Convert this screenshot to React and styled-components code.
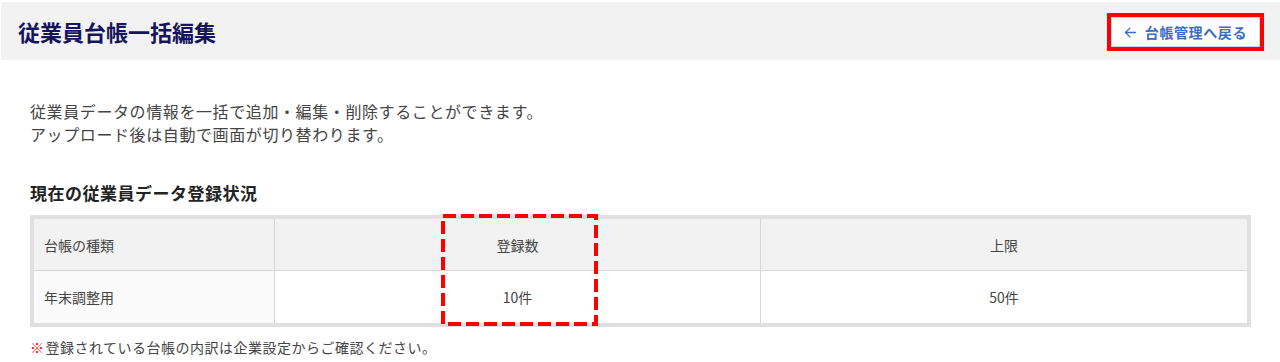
import React from "react";
import styled, { createGlobalStyle } from "styled-components";

const Global = createGlobalStyle`
  html, body { margin: 0; padding: 0; background: #fff; }
  body { font-family: "Noto Sans CJK JP", "Noto Sans", sans-serif; color: #444; }
`;

const Page = styled.div`
  padding-top: 2px;
  padding-left: 1px;
`;

const Header = styled.header`
  height: 58px;
  background: #f2f2f2;
  display: flex;
  align-items: center;
  justify-content: space-between;
  padding: 0 16px 0 17px;
`;

const Title = styled.h1`
  margin: 0;
  font-size: 22px;
  font-weight: 700;
  color: #15155e;
`;

const Highlight = styled.div`
  border: 4px solid #ff0000;
  margin-top: 2px;
  display: flex;
`;

const BackButton = styled.button`
  height: 30px;
  padding: 0 12px 0 11px;
  background: #fff;
  border: 1px solid #c9d6ee;
  color: #3a6cc4;
  font-family: inherit;
  font-size: 14px;
  letter-spacing: 0.6px;
  font-weight: 700;
  display: flex;
  align-items: center;
  gap: 7px;
  cursor: pointer;
`;

const Content = styled.main`
  padding: 40px 29px 0 29px;
`;

const Description = styled.p`
  margin: 0;
  font-size: 16px;
  letter-spacing: 0.6px;
  line-height: 23px;
  color: #444;
`;

const SectionTitle = styled.h2`
  margin: 35px 0 0;
  font-size: 17px;
  letter-spacing: 0.5px;
  line-height: 24px;
  font-weight: 700;
  color: #222;
`;

const TableWrap = styled.div`
  position: relative;
  margin-top: 10px;
`;

const Table = styled.table`
  width: 100%;
  border-collapse: separate;
  border-spacing: 0;
  border: 4px solid #e0e0e0;
  font-size: 14px;
  color: #444;
  table-layout: fixed;
`;

const Cell = styled.td`
  height: ${(p) => (p.$head ? "51px" : "52px")};
  padding: 0 10px;
  text-align: ${(p) => (p.$left ? "left" : "center")};
  background: ${(p) => (p.$head ? "#f2f2f2" : p.$left ? "#fafafa" : "#fff")};
  border-right: ${(p) => (p.$last ? "none" : "1px solid #d6d6d6")};
  border-bottom: ${(p) => (p.$head ? "1px solid #d6d6d6" : "none")};
  font-weight: 400;
`;

const DashedMark = styled.svg`
  position: absolute;
  left: 411px;
  top: -1px;
  width: 157px;
  height: 112px;
  pointer-events: none;
`;

const Note = styled.p`
  margin: 10px 0 0;
  font-size: 14px;
  letter-spacing: 0.5px;
  line-height: 20px;
  color: #444;
`;

const Mark = styled.span`
  color: #ff0000;
  margin-right: 1px;
`;

export default function App() {
  return (
    <Page>
      <Global />
      <Header>
        <Title>従業員台帳一括編集</Title>
        <Highlight>
          <BackButton>
            <svg width="15" height="15" viewBox="0 0 24 24" fill="none" stroke="currentColor" strokeWidth="2.2" strokeLinecap="round" strokeLinejoin="round">
              <path d="M20 12H4" />
              <path d="M11 19l-7-7 7-7" />
            </svg>
            台帳管理へ戻る
          </BackButton>
        </Highlight>
      </Header>
      <Content>
        <Description>
          従業員データの情報を一括で追加・編集・削除することができます。
          <br />
          アップロード後は自動で画面が切り替わります。
        </Description>
        <SectionTitle>現在の従業員データ登録状況</SectionTitle>
        <TableWrap>
          <Table>
            <colgroup>
              <col style={{ width: 241 }} />
              <col />
              <col />
            </colgroup>
            <thead>
              <tr>
                <Cell as="th" $head $left>台帳の種類</Cell>
                <Cell as="th" $head>登録数</Cell>
                <Cell as="th" $head $last>上限</Cell>
              </tr>
            </thead>
            <tbody>
              <tr>
                <Cell $left>年末調整用</Cell>
                <Cell>10件</Cell>
                <Cell $last>50件</Cell>
              </tr>
            </tbody>
          </Table>
          <DashedMark viewBox="0 0 157 112">
            <rect x="2" y="2" width="153" height="108" fill="none" stroke="#ff0000" strokeWidth="4" strokeDasharray="13 5" />
          </DashedMark>
        </TableWrap>
        <Note>
          <Mark>※</Mark>登録されている台帳の内訳は企業設定からご確認ください。
        </Note>
      </Content>
    </Page>
  );
}
